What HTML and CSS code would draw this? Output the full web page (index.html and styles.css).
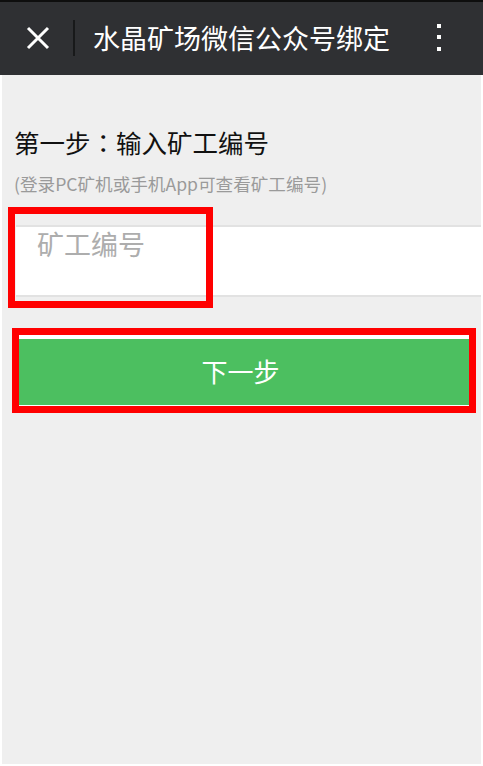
FILE: index.html
```html
<!DOCTYPE html>
<html lang="zh-CN">
<head>
<meta charset="utf-8">
<title>水晶矿场微信公众号绑定</title>
<link rel="stylesheet" href="styles.css">
</head>
<body>
<header class="topbar">
  <span class="close-icon">
    <svg width="24" height="24" viewBox="0 0 24 24"><path d="M2 2 L22 22 M22 2 L2 22" stroke="#ffffff" stroke-width="3" fill="none"/></svg>
  </span>
  <span class="divider"></span>
  <h1 class="title">水晶矿场微信公众号绑定</h1>
  <span class="more-icon">
    <svg width="6" height="30" viewBox="0 0 6 30"><rect x="1" y="1" width="4" height="4" fill="#fff"/><rect x="1" y="12" width="4" height="4" fill="#fff"/><rect x="1" y="24" width="4" height="4" fill="#fff"/></svg>
  </span>
</header>
<main class="content">
  <p class="step">第一步<span class="colon" lang="zh-TW">：</span>输入矿工编号</p>
  <p class="hint">(登录PC矿机或手机App可查看矿工编号)</p>
  <div class="field">
    <input class="miner-input" type="text" placeholder="矿工编号">
    <span class="mark mark-input"></span>
  </div>
  <button class="next-btn" type="button">下一步</button>
</main>
</body>
</html>
```
FILE: styles.css
```css
html, body {
  margin: 0;
  padding: 0;
}
body {
  background: #ffffff;
  font-family: "Noto Sans CJK SC", "Noto Sans", sans-serif;
  width: 483px;
  height: 766px;
  overflow: hidden;
}
.topbar {
  height: 73px;
  border-top: 2px solid #0e0e0e;
  background: #2f3033;
  display: flex;
  align-items: center;
  color: #fff;
}
.close-icon {
  display: flex;
  margin-left: 26px;
  margin-top: -2px;
}
.divider {
  width: 2px;
  height: 36px;
  background: #18191a;
  margin-left: 23px;
  margin-top: -2px;
}
.title {
  margin: -2px 0 0 18px;
  font-size: 27px;
  font-weight: normal;
  line-height: 32px;
  white-space: nowrap;
  flex: 1;
}
.more-icon {
  display: flex;
  margin-right: 41px;
  margin-top: -2px;
}
.content {
  background: #efefef;
  margin: 0 2px;
  height: 689px;
  padding-top: 52px;
  box-sizing: border-box;
}
.step {
  margin: 0 0 0 12px;
  font-size: 25.5px;
  line-height: 30px;
  color: #111;
}
.colon {
  font-family: "Noto Sans CJK TC", "Noto Sans CJK SC", sans-serif;
}
.hint {
  margin: 16px 0 0 12px;
  font-size: 17.6px;
  line-height: 22px;
  color: #9a9a9a;
}
.field {
  position: relative;
  margin: 30px 0 0 14px;
}
.miner-input {
  display: block;
  width: 100%;
  height: 72px;
  box-sizing: border-box;
  border: none;
  border-top: 2px solid #e2e2e2;
  border-bottom: 2px solid #e2e2e2;
  background: #fff;
  padding: 0 0 36px 21px;
  font-family: inherit;
  font-size: 27px;
  line-height: 30px;
  color: #333;
  outline: none;
}
.miner-input::placeholder {
  color: #adadad;
}
.mark {
  position: absolute;
  border: 7px solid #ff0000;
  box-sizing: border-box;
}
.mark-input {
  left: -8px;
  top: -18px;
  width: 205px;
  height: 101px;
}
.next-btn {
  display: block;
  margin: 38px 0 0 17px;
  width: 450px;
  height: 71px;
  box-sizing: border-box;
  border: none;
  border-top: 4px solid #ffffff;
  border-bottom: 1px solid #ffffff;
  background: #4cbf60;
  color: #fff;
  font-family: inherit;
  font-size: 26px;
  line-height: 30px;
  padding: 0 7px 2px 0;
  outline: 7px solid #ff0000;
}
```
